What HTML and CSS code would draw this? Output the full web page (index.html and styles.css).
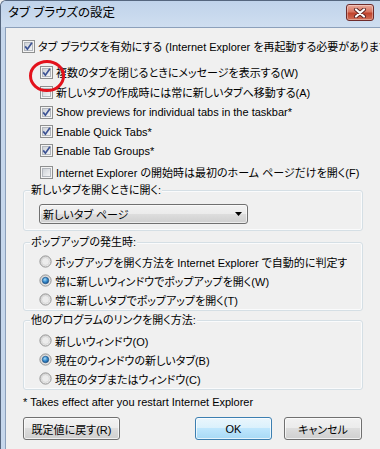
FILE: index.html
```html
<!DOCTYPE html>
<html lang="ja">
<head>
  <meta charset="UTF-8">
  <title>タブ ブラウズの設定</title>
  <link rel="stylesheet" href="styles.css">
</head>
<body>
  <!-- shared shapes for checkboxes and radios -->
  <svg class="defs" width="0" height="0">
    <defs>
      <linearGradient id="cbg" x1="0" y1="0" x2="1" y2="1">
        <stop offset="0" stop-color="#cbcfd5"/>
        <stop offset="1" stop-color="#f7f7f7"/>
      </linearGradient>
      <linearGradient id="rbg" x1="0" y1="0" x2="1" y2="1">
        <stop offset="0" stop-color="#c9c9c9"/>
        <stop offset="1" stop-color="#fbfbfb"/>
      </linearGradient>
      <radialGradient id="dot" cx="0.4" cy="0.35" r="0.7">
        <stop offset="0" stop-color="#a9dcf7"/>
        <stop offset="0.5" stop-color="#3a8fd0"/>
        <stop offset="1" stop-color="#16528c"/>
      </radialGradient>
      <symbol id="cb" viewBox="0 0 13 13">
        <rect x="0.5" y="0.5" width="12" height="12" fill="#f4f4f4" stroke="#8e8f8f"/>
        <rect x="2.5" y="2.5" width="8" height="8" fill="url(#cbg)" stroke="#b2b6bc"/>
      </symbol>
      <symbol id="cb-on" viewBox="0 0 13 13">
        <use href="#cb"/>
        <path d="M3.2 6.4 L5.4 9.2 L9.9 2.8" fill="none" stroke="#3d5394" stroke-width="1.7"/>
      </symbol>
      <symbol id="rb" viewBox="0 0 13 13">
        <circle cx="6.5" cy="6.5" r="5.6" fill="url(#rbg)" stroke="#939393"/>
        <circle cx="6.5" cy="6.5" r="3.9" fill="#ececec" stroke="#d2d2d2" stroke-width="0.8"/>
      </symbol>
      <symbol id="rb-on" viewBox="0 0 13 13">
        <use href="#rb"/>
        <circle cx="6.5" cy="6.5" r="3.2" fill="url(#dot)" stroke="#1a4f84" stroke-width="0.7"/>
      </symbol>
    </defs>
  </svg>

  <div class="window">
    <div class="titlebar">
      <span class="title">タブ ブラウズの設定</span>
      <div class="close">
        <svg width="14" height="10" viewBox="0 0 14 10">
          <path d="M3 1.5 L11 8.5 M11 1.5 L3 8.5" stroke="#5a2323" stroke-width="4" stroke-linecap="round"/>
          <path d="M3 1.5 L11 8.5 M11 1.5 L3 8.5" stroke="#fff" stroke-width="2.2" stroke-linecap="round"/>
        </svg>
      </div>
    </div>

    <div class="client">
      <div class="opt first">
        <svg class="box"><use href="#cb-on"/></svg>
        <span>タブ ブラウズを有効にする (Internet Explorer を再起動する必要があります)</span>
      </div>

      <div class="sub">
        <div class="opt r20"><svg class="box"><use href="#cb-on"/></svg><span>複数のタブを閉じるときにメッセージを表示する(W)</span></div>
        <div class="opt r20"><svg class="box"><use href="#cb"/></svg><span>新しいタブの作成時には常に新しいタブへ移動する(A)</span></div>
        <div class="opt r20"><svg class="box"><use href="#cb-on"/></svg><span>Show previews for individual tabs in the taskbar*</span></div>
        <div class="opt r19"><svg class="box"><use href="#cb-on"/></svg><span>Enable Quick Tabs*</span></div>
        <div class="opt r19"><svg class="box"><use href="#cb-on"/></svg><span>Enable Tab Groups*</span></div>
        <div class="opt r20 home"><svg class="box"><use href="#cb"/></svg><span>Internet Explorer の開始時は最初のホーム ページだけを開く(F)</span></div>
      </div>

      <div class="group g-newtab">
        <div class="legend">新しいタブを開くときに開く:</div>
        <div class="group-body">
          <div class="combo">
            <span>新しいタブ ページ</span>
            <svg width="7" height="4" viewBox="0 0 7 4"><path d="M0 0 H7 L3.5 4 Z" fill="#000"/></svg>
          </div>
        </div>
      </div>

      <div class="group g-popup">
        <div class="legend">ポップアップの発生時:</div>
        <div class="group-body">
          <div class="opt r19"><svg class="box"><use href="#rb"/></svg><span class="clip">ポップアップを開く方法を Internet Explorer で自動的に判定する(I)</span></div>
          <div class="opt r19"><svg class="box"><use href="#rb-on"/></svg><span>常に新しいウィンドウでポップアップを開く(W)</span></div>
          <div class="opt r19"><svg class="box"><use href="#rb"/></svg><span>常に新しいタブでポップアップを開く(T)</span></div>
        </div>
      </div>

      <div class="group g-links">
        <div class="legend">他のプログラムのリンクを開く方法:</div>
        <div class="group-body">
          <div class="opt r19"><svg class="box"><use href="#rb"/></svg><span>新しいウィンドウ(O)</span></div>
          <div class="opt r19"><svg class="box"><use href="#rb-on"/></svg><span>現在のウィンドウの新しいタブ(B)</span></div>
          <div class="opt r19"><svg class="box"><use href="#rb"/></svg><span>現在のタブまたはウィンドウ(C)</span></div>
        </div>
      </div>

      <div class="note">* Takes effect after you restart Internet Explorer</div>

      <div class="buttons">
        <button class="btn reset">既定値に戻す(R)</button>
        <div class="right">
          <button class="btn ok">OK</button>
          <button class="btn cancel">キャンセル</button>
        </div>
      </div>
    </div>

    <!-- red marker drawn over the screenshot -->
    <svg class="marker" width="38" height="34" viewBox="0 0 38 34">
      <ellipse cx="19" cy="17" rx="16.5" ry="14.5" fill="none" stroke="#e3121c" stroke-width="3"/>
    </svg>
  </div>
</body>
</html>
```

FILE: styles.css
```css
* { box-sizing: border-box; }
body { margin: 0; background: #f0f0f0; color: #000; font: 11px "Liberation Sans", "Noto Sans CJK JP", sans-serif; font-feature-settings: "palt"; }
.defs { display: block; width: 0; height: 0; overflow: hidden; }

.window { position: relative; width: 380px; height: 449px; overflow: hidden; display: flex; flex-direction: column; background: #c6d7ec; border-top: 1px solid #55667e; border-left: 1px solid #55667e; border-top-left-radius: 6px; }

.titlebar { height: 26px; flex: none; display: flex; align-items: flex-start; justify-content: space-between; padding-left: 7px; background: linear-gradient(#c0d3ea, #cfdef0); }
.title { font-size: 12.5px; line-height: 24px; }
.close { width: 28px; height: 17px; margin: 3px 6px 0 0; display: flex; align-items: center; justify-content: center; border: 1px solid #6e2b2b; border-radius: 3px; background: linear-gradient(#e9a99b 0%, #d87562 45%, #c0432d 55%, #d1705a 100%); box-shadow: inset 0 0 0 1px rgba(255,255,255,0.35); }

.client { flex: 1; margin-left: 4px; border-left: 1px solid #8ca0bb; border-top: 1px solid #8ca0bb; background: #f0f0f0; }

.opt { display: flex; align-items: center; gap: 3px; white-space: nowrap; }
.opt .box { width: 13px; height: 13px; flex: none; }
.r20 { height: 20px; }
.r19 { height: 19px; }
.first { height: 18px; margin: 9px 0 0 16px; }
.sub { margin: 7px 0 0 34px; }
.home { margin-top: 2px; }

.group { margin: 8px 17px 0 17px; border: 1px solid #d5dfe5; border-radius: 3px; box-shadow: inset 0 0 0 1px #fafbfc; }
.legend { width: max-content; height: 16px; line-height: 16px; margin: -9px 0 0 6px; padding: 0 1px; background: #f0f0f0; }
.group-body { padding-left: 15px; }
.opt .clip { width: 292px; overflow: hidden; }

.g-newtab .group-body { padding-top: 6px; padding-bottom: 6px; }
.g-popup { margin-top: 11px; }
.g-popup .group-body { padding-top: 2px; padding-bottom: 1px; }
.g-links { margin-top: 9px; }
.g-links .group-body { padding-top: 3px; padding-bottom: 1px; }

.combo { width: 209px; height: 20px; display: flex; align-items: center; justify-content: space-between; padding: 0 5px 0 3px; border: 1px solid #707070; border-radius: 3px; background: linear-gradient(#f2f2f2 0%, #ebebeb 50%, #dddddd 50%, #cfcfcf 100%); box-shadow: inset 0 0 0 1px rgba(255,255,255,0.6); }

.note { height: 16px; line-height: 16px; margin: 4px 0 0 17px; }

.buttons { display: flex; justify-content: space-between; margin: 7px 18px 0 17px; }
.buttons .right { display: flex; gap: 12px; }
.btn { height: 23px; padding: 0; font: inherit; color: #000; border: 1px solid #707070; border-radius: 3px; background: linear-gradient(#f2f2f2 0%, #ebebeb 50%, #dddddd 50%, #cfcfcf 100%); box-shadow: inset 0 0 0 1px rgba(255,255,255,0.7); }
.reset { width: 97px; }
.ok { width: 77px; border-color: #3c7fb1; background: linear-gradient(#eaf6fd 0%, #d9f0fc 50%, #bee6fd 50%, #a7d9f5 100%); }
.cancel { width: 78px; }

.marker { position: absolute; left: 27px; top: 58px; }
```
